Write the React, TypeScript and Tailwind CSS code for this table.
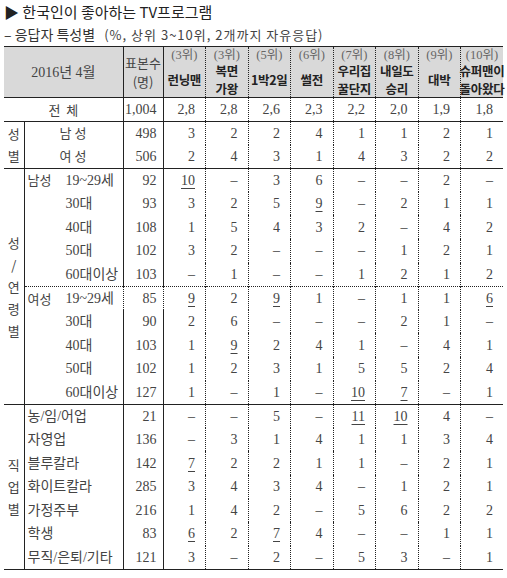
import React from "react";

type Cell = string | [string, true];

interface RowType {
   sub?: string;
   label: string;
   n: string;
   values: Cell[];
   dottedTop?: boolean;
}

const programs = [
   { rank: "(3위)", name: ["런닝맨"] },
   { rank: "(3위)", name: ["복면", "가왕"] },
   { rank: "(5위)", name: ["1박2일"] },
   { rank: "(6위)", name: ["썰전"] },
   { rank: "(7위)", name: ["우리집", "꿀단지"] },
   { rank: "(8위)", name: ["내일도", "승리"] },
   { rank: "(9위)", name: ["대박"] },
   { rank: "(10위)", name: ["슈퍼맨이", "돌아왔다"] },
];

const u = (v: string): [string, true] => [v, true];

const genderRows: RowType[] = [
   { label: "남 성", n: "498", values: ["3", "2", "2", "4", "1", "1", "2", "1"] },
   { label: "여 성", n: "506", values: ["2", "4", "3", "1", "4", "3", "2", "2"] },
];

const ageRows: RowType[] = [
   { sub: "남성", label: "19~29세", n: "92", values: [u("10"), "–", "3", "6", "–", "–", "2", "–"] },
   { label: "30대", n: "93", values: ["3", "2", "5", u("9"), "–", "2", "1", "1"] },
   { label: "40대", n: "108", values: ["1", "5", "4", "3", "2", "–", "4", "2"] },
   { label: "50대", n: "102", values: ["3", "2", "–", "–", "–", "1", "2", "1"] },
   { label: "60대이상", n: "103", values: ["–", "1", "–", "–", "1", "2", "1", "2"] },
   { sub: "여성", label: "19~29세", n: "85", values: [u("9"), "2", u("9"), "1", "–", "1", "1", u("6")], dottedTop: true },
   { label: "30대", n: "90", values: ["2", "6", "–", "–", "–", "2", "1", "–"] },
   { label: "40대", n: "103", values: ["1", u("9"), "2", "4", "1", "–", "4", "1"] },
   { label: "50대", n: "102", values: ["1", "2", "3", "1", "5", "5", "2", "4"] },
   { label: "60대이상", n: "127", values: ["1", "–", "1", "–", u("10"), u("7"), "–", "1"] },
];

const jobRows: RowType[] = [
   { label: "농/임/어업", n: "21", values: ["–", "–", "5", "–", u("11"), u("10"), "4", "–"] },
   { label: "자영업", n: "136", values: ["–", "3", "1", "4", "1", "1", "3", "4"] },
   { label: "블루칼라", n: "142", values: [u("7"), "2", "2", "1", "1", "–", "2", "1"] },
   { label: "화이트칼라", n: "285", values: ["3", "4", "3", "4", "–", "1", "2", "1"] },
   { label: "가정주부", n: "216", values: ["1", "4", "2", "–", "5", "6", "2", "2"] },
   { label: "학생", n: "83", values: [u("6"), "2", u("7"), "4", "–", "–", "1", "1"] },
   { label: "무직/은퇴/기타", n: "121", values: ["3", "–", "2", "–", "5", "3", "–", "1"] },
];

const serif = "font-['Liberation_Serif','Noto_Sans_CJK_KR',serif]";

function GroupLabel({ chars }: { chars: string[] }) {
   return (
      <div className="flex flex-col items-center gap-[1px] font-['Noto_Sans_CJK_KR',sans-serif] text-[13px] text-[#444] leading-[21px]">
         {chars.map((c, i) => (
            <span key={i}>{c}</span>
         ))}
      </div>
   );
}

function ValueCells({ values, dottedTop }: { values: Cell[]; dottedTop?: boolean }) {
   return (
      <>
         {values.map((v, i) => {
            const text = typeof v === "string" ? v : v[0];
            const underline = typeof v !== "string";
            return (
               <td
                  key={i}
                  className={`text-right pr-[10px] ${i > 0 ? "border-l border-dotted border-l-[#222]" : ""} ${dottedTop ? "border-t border-dotted border-t-[#222]" : ""}`}
               >
                  <span className={underline ? "underline underline-offset-[3px] decoration-1" : ""}>{text}</span>
               </td>
            );
         })}
      </>
   );
}

function LabelOffset({ row }: { row: RowType }) {
   if (row.sub) return <span className="w-[38px] shrink-0 font-['Noto_Sans_CJK_KR',sans-serif] text-[13px]">{row.sub}</span>;
   if (row.label.includes("대")) return <span className="w-[38px] shrink-0"></span>;
   return null;
}

function DataRow({ row, group, rowSpan }: { row: RowType; group?: React.ReactNode; rowSpan?: number }) {
   const top = row.dottedTop ? "border-t border-dotted border-t-[#222]" : "";
   const centered = row.label === "남 성" || row.label === "여 성";
   return (
      <tr className="h-[23.6px]">
         {group !== undefined ? (
            <td rowSpan={rowSpan} className="border-r border-[#222] align-middle p-0">
               {group}
            </td>
         ) : null}
         <td className={`pl-[3px] text-[#444] ${top}`}>
            <div className="flex items-center whitespace-nowrap">
               {centered ? (
                  <span className="w-full text-center pr-[4px] font-['Noto_Sans_CJK_KR',sans-serif] text-[13px]">{row.label}</span>
               ) : (
                  <>
                     <LabelOffset row={row} />
                     <span className="text-[14px]">{row.label}</span>
                  </>
               )}
            </div>
         </td>
         <td className={`border-l border-r border-[#222] text-right pr-[6px] ${top}`}>{row.n}</td>
         <ValueCells values={row.values} dottedTop={row.dottedTop} />
      </tr>
   );
}

export default function App() {
   return (
      <div className="w-[507px] h-[578px] bg-white overflow-hidden font-['Noto_Sans_CJK_KR',sans-serif] text-[#333]">
         <div className="pl-[4px] pt-[2px] text-[15px] leading-[20px] text-[#222]">▶ 한국인이 좋아하는 TV프로그램</div>
         <div className="pl-[4px] pt-[3px] text-[14px] leading-[18px] text-[#333] whitespace-nowrap">
            – 응답자 특성별 <span className="ml-[6px] text-[13px] tracking-[1px] text-[#444]">(%, 상위 3~10위, 2개까지 자유응답)</span>
         </div>
         <table className={`ml-[4px] mt-[2px] w-[499px] table-fixed border-collapse ${serif} text-[14px] text-[#444]`}>
            <colgroup>
               <col className="w-[20px]" />
               <col className="w-[99px]" />
               <col className="w-[40px]" />
               {programs.map((_, i) => (
                  <col key={i} className="w-[42.5px]" />
               ))}
            </colgroup>
            <thead>
               <tr className="h-[51px] bg-[#d9d9d9] border-t-[1.5px] border-b border-[#222]">
                  <th colSpan={2} className="font-normal text-[14px] text-[#444] text-center">
                     2016년 4월
                  </th>
                  <th className="border-l border-r border-[#222] font-normal font-['Noto_Sans_CJK_KR',sans-serif] text-[13px] leading-[19px] text-[#444] align-middle">
                     <div>표본수</div>
                     <div>(명)</div>
                  </th>
                  {programs.map((p, i) => (
                     <th
                        key={i}
                        className={`p-0 align-top font-normal ${i > 0 ? "border-l border-dotted border-l-[#222]" : ""}`}
                     >
                        <div className="flex flex-col items-center h-[50px]">
                           <div className="text-[12.5px] leading-[14px] text-[#666] pt-[1px] whitespace-nowrap">{p.rank}</div>
                           <div className="flex-1 flex flex-col justify-center font-['Noto_Sans_CJK_KR',sans-serif] font-bold text-[12.5px] leading-[18px] text-[#222] whitespace-nowrap tracking-[-0.3px]">
                              {p.name.map((l, j) => (
                                 <div key={j}>{l}</div>
                              ))}
                           </div>
                        </div>
                     </th>
                  ))}
               </tr>
            </thead>
            <tbody>
               <tr className="h-[23.6px] border-b border-[#222]">
                  <td colSpan={2} className="text-center font-['Noto_Sans_CJK_KR',sans-serif] text-[13px] text-[#444]">
                     전&nbsp;&nbsp;체
                  </td>
                  <td className="border-l border-r border-[#222] text-right pr-[6px]">1,004</td>
                  <ValueCells values={["2,8", "2,8", "2,6", "2,3", "2,2", "2,0", "1,9", "1,8"]} />
               </tr>
               {genderRows.map((r, i) => (
                  <DataRow
                     key={"g" + i}
                     row={r}
                     group={i === 0 ? <GroupLabel chars={["성", "별"]} /> : undefined}
                     rowSpan={2}
                  />
               ))}
               <tr className="h-0 border-t border-[#222]"></tr>
               {ageRows.map((r, i) => (
                  <DataRow
                     key={"a" + i}
                     row={r}
                     group={i === 0 ? <GroupLabel chars={["성", "/", "연", "령", "별"]} /> : undefined}
                     rowSpan={10}
                  />
               ))}
               <tr className="h-0 border-t border-[#222]"></tr>
               {jobRows.map((r, i) => (
                  <DataRow
                     key={"j" + i}
                     row={r}
                     group={i === 0 ? <GroupLabel chars={["직", "업", "별"]} /> : undefined}
                     rowSpan={7}
                  />
               ))}
               <tr className="h-0 border-t border-[#222]"></tr>
            </tbody>
         </table>
      </div>
   );
}
